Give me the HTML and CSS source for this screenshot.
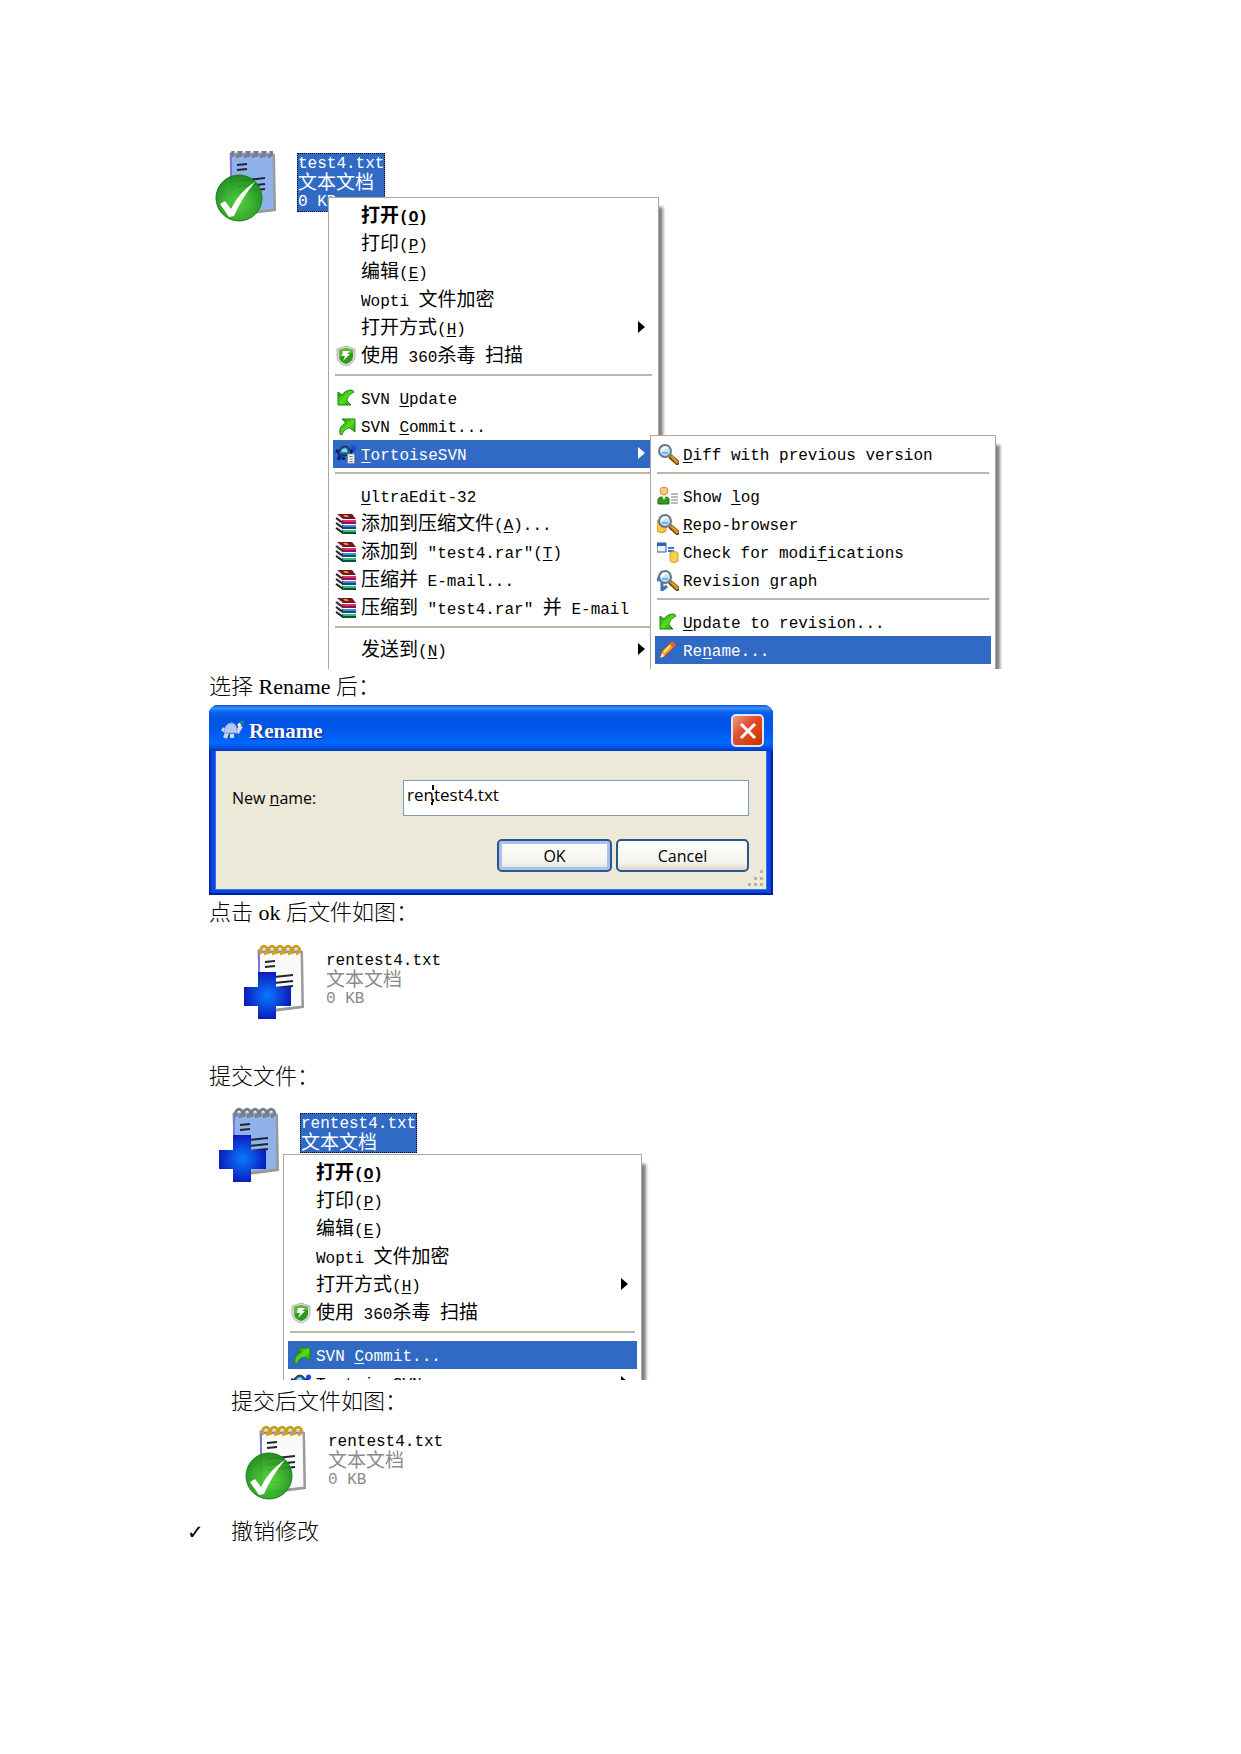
FILE: index.html
```html
<!DOCTYPE html>
<html lang="zh-CN">
<head>
	<meta charset="UTF-8">
	<meta name="viewport" content="width=device-width, initial-scale=1.0">
	<title>TortoiseSVN Rename</title>
	<link rel="stylesheet" href="styles.css">
</head>
<body>

<!-- shared icons -->
<svg class="defs" aria-hidden="true">
	<defs>
		<radialGradient id="gGreen" cx="50%" cy="60%" r="60%">
			<stop offset="0" stop-color="#4fd934"/>
			<stop offset="1" stop-color="#1b861b"/>
		</radialGradient>
		<radialGradient id="gBlue" cx="50%" cy="50%" r="55%">
			<stop offset="0" stop-color="#0a7bff"/>
			<stop offset="1" stop-color="#0a14b8"/>
		</radialGradient>
		<linearGradient id="gArrow" x1="0" y1="0" x2="1" y2="1">
			<stop offset="0" stop-color="#0b8a0b"/>
			<stop offset="0.5" stop-color="#5ddc1c"/>
			<stop offset="1" stop-color="#128a12"/>
		</linearGradient>
	</defs>
	<symbol id="note" viewBox="0 0 62 75">
		<path d="M17 7 L60 7 L61 64 L22 69 L19 67 Z" fill="#999"/>
		<path class="paper" d="M15 6 L58 6 L59 62 L17 67 Z" stroke="#9a9a9a"/>
		<path d="M16 6 V66" stroke="#7f78d8" stroke-width="2"/>
		<path d="M15 8 H58" stroke="#8d86cf" stroke-width="2"/>
		<g class="rings" fill="none" stroke-width="3">
			<path d="M18 10 C16 4 20 1 23 3 C26 5 24 9 21 10"/>
			<path d="M26 10 C24 4 28 1 31 3 C34 5 32 9 29 10"/>
			<path d="M34 10 C32 4 36 1 39 3 C42 5 40 9 37 10"/>
			<path d="M42 10 C40 4 44 1 47 3 C50 5 48 9 45 10"/>
			<path d="M50 10 C48 4 52 1 55 3 C58 5 56 9 53 10"/>
		</g>
		<path d="M22 18 L32 17 M22 23 L32 22 M22 34 L50 31 M22 40 L50 37 M22 45 L50 42 M22 58 L32 57" stroke="#223" stroke-width="2"/>
	</symbol>
	<symbol id="okMark" viewBox="0 0 62 75">
		<circle cx="24" cy="51" r="23" fill="url(#gGreen)" fill-opacity="0.95" stroke="#188018"/>
		<path d="M5 57 L10 54 L16 62 C23 48 31 41 40 35 C32 45 25 55 19 69 L14 70 Z" fill="#fff"/>
	</symbol>
	<symbol id="addMark" viewBox="0 0 62 75">
		<path d="M15 28 H33 V43 H48 V62 H33 V75 H15 V62 H1 V43 H15 Z" fill="url(#gBlue)"/>
	</symbol>
	<symbol id="shield" viewBox="0 0 22 22">
		<path d="M11 1 L20 4 V11 C20 17 15 20 11 21 C7 20 2 17 2 11 V4 Z" fill="#d5d8d5" stroke="#b5b8b5"/>
		<path d="M11 3 L18 5 V11 C18 16 14 18 11 19 C8 18 4 16 4 11 V5 Z" fill="#2d9a12"/>
		<path d="M11 3 L18 5 V8 C13 8 8 10 4 13 V5 Z" fill="#63b83a"/>
		<path d="M8 6 H15 L12 9 H15 L8 16 L10 11 H7 Z" fill="#fff"/>
	</symbol>
	<symbol id="update" viewBox="0 0 22 22">
		<path d="M3 5 V18 H16 L12 14 C12 10 15 7 19 5 L17 3 C12 3 9 5 7 8 Z" fill="url(#gArrow)" stroke="#148a10"/>
	</symbol>
	<symbol id="commit" viewBox="0 0 22 22">
		<path d="M20 4 H7 L11 8 C6 10 4 14 5 19 L7 20 C8 16 11 13 15 13 L20 17 Z" fill="url(#gArrow)" stroke="#148a10"/>
	</symbol>
	<symbol id="tortoise" viewBox="0 0 26 22">
		<path d="M1 7 L6 9 M4 18 L6 13 M10 18 V14 M17 10 L22 5" stroke="#0c1d8c" stroke-width="4"/>
		<path d="M4 12 C4 4 9 1 13 2 C18 3 19 8 19 13 Z" fill="#1f5c8e" stroke="#0b1230"/>
		<path d="M7 9 C8 5 11 3 14 5 L15 9 Z" fill="#77dff5"/>
		<circle cx="22" cy="4" r="3" fill="#1b45e0"/>
		<path d="M15 11 H23 V22 H15 Z" fill="#fff" stroke="#888"/>
		<path d="M17 14 H21 M17 17 H21 M17 20 H21" stroke="#555"/>
	</symbol>
	<symbol id="rar" viewBox="0 0 22 22">
		<path d="M2 2 L8 7 V21 L2 16 Z" fill="#e4e4e4"/>
		<path d="M1 5 L8 10 M1 10 L8 15 M1 15 L8 20" stroke="#222" stroke-width="2"/>
		<path d="M7 7 H21 V11 H7 Z" fill="#8c1640"/>
		<path d="M7 12 H21 V16 H7 Z" fill="#1c4677"/>
		<path d="M7 17 H21 V21 H7 Z" fill="#125238"/>
		<path d="M2 1 H17 L21 6 H8 Z" fill="#7c1222"/>
		<path d="M8 7 H21 V9 H8 Z" fill="#dd2f80"/>
		<path d="M8 12 H21 V14 H8 Z" fill="#3b8ee0"/>
		<path d="M8 17 H21 V19 H8 Z" fill="#2fbf75"/>
		<path d="M8 2 H12 L14 4 H10 Z" fill="#d6a21c"/>
	</symbol>
	<symbol id="lens" viewBox="0 0 22 22">
		<path d="M13 13 L22 21" stroke="#5b3808" stroke-width="5"/>
		<path d="M14 13 L21 20" stroke="#d79a25" stroke-width="3"/>
		<circle cx="8" cy="8" r="6" fill="#bfe4fa" stroke="#6c7680" stroke-width="2"/>
		<path d="M5 8 C5 5 8 4 11 5" fill="none" stroke="#fff" stroke-width="2"/>
		<path d="M5 10 H11" stroke="#3d84c4"/>
	</symbol>
	<symbol id="person" viewBox="0 0 22 22">
		<circle cx="7" cy="6" r="4" fill="#f4c98b" stroke="#d99339"/>
		<path d="M1 19 V14 C2 11 12 11 12 14 V19 Z" fill="#2f9a1c" stroke="#237312"/>
		<path d="M5 11 L7 15 L9 11 Z" fill="#fff"/>
		<path d="M14 9 H21 M14 12 H21 M14 15 H21 M14 18 H21" stroke="#777"/>
	</symbol>
	<symbol id="repo" viewBox="0 0 22 22">
		<path d="M0 8 C3 6 7 6 9 8 V18 C7 20 3 20 0 18 Z" fill="#f5c842" stroke="#cf952a"/>
		<use href="#lens"/>
	</symbol>
	<symbol id="check" viewBox="0 0 22 22">
		<path d="M0 2 H9 V11 H0 Z" fill="#e8f1fc" stroke="#2f5b9c"/>
		<path d="M0 2 H9 V5 H0 Z" fill="#2f62b0"/>
		<path d="M11 7 H17 M11 10 H17" stroke="#2f7ac0" stroke-width="2"/>
		<path d="M13 12 C15 10 19 10 21 12 V20 C19 22 15 22 13 20 Z" fill="#f7cf4c" stroke="#d29c2d"/>
	</symbol>
	<symbol id="graph" viewBox="0 0 22 22">
		<path d="M0 12 L4 5 L7 11 M5 11 V21 L10 17" fill="none" stroke="#3d73b8" stroke-width="3"/>
		<use href="#lens"/>
	</symbol>
	<symbol id="pencil" viewBox="0 0 22 22">
		<path d="M3 19 L5 12 L14 3 C16 2 19 5 18 7 L9 16 Z" fill="#f4a428" stroke="#a8480c"/>
		<path d="M7 13 L15 5" stroke="#ffe28a" stroke-width="2"/>
		<path d="M14 3 C16 2 19 5 18 7 L16 9 L12 5 Z" fill="#e2603c"/>
		<path d="M3 19 L5 14 L8 17 Z" fill="#fff0c8"/>
	</symbol>
	<symbol id="turtle" viewBox="0 0 24 22">
		<path d="M2 9 L6 11 M5 18 L7 13 M12 18 V14 M17 13 L21 6" stroke="#ddd8d0" stroke-width="4"/>
		<path d="M4 13 C4 6 8 3 12 3 C16 4 17 8 17 13 Z" fill="#b4c8f5" stroke="#8aa2dd"/>
		<path d="M18 6 L23 2" stroke="#f4f4f4" stroke-width="3"/>
		<circle cx="22" cy="3" r="2" fill="#1c7f78"/>
	</symbol>
</svg>

<main class="page">

	<figure class="shot">
		<div class="file selected">
			<svg class="file-icon"><use href="#note"/><use href="#okMark"/></svg>
			<div class="file-text">
				<div class="file-name">test4.txt</div>
				<div><span class="zh">文本文档</span></div>
				<div>0 KB</div>
			</div>
		</div>
		<ul class="menu menu-rename">
			<li><button class="item default" type="button"><i class="icon"></i><span><span class="zh">打开</span>(<u>O</u>)</span></button></li>
			<li><button class="item" type="button"><i class="icon"></i><span><span class="zh">打印</span>(<u>P</u>)</span></button></li>
			<li><button class="item" type="button"><i class="icon"></i><span><span class="zh">编辑</span>(<u>E</u>)</span></button></li>
			<li><button class="item" type="button"><i class="icon"></i><span>Wopti <span class="zh">文件加密</span></span></button></li>
			<li><button class="item more" type="button"><i class="icon"></i><span><span class="zh">打开方式</span>(<u>H</u>)</span></button></li>
			<li><button class="item" type="button"><svg class="icon"><use href="#shield"/></svg><span><span class="zh">使用</span> 360<span class="zh">杀毒</span> <span class="zh">扫描</span></span></button></li>
			<li class="line"></li>
			<li><button class="item" type="button"><svg class="icon"><use href="#update"/></svg><span>SVN <u>U</u>pdate</span></button></li>
			<li><button class="item" type="button"><svg class="icon"><use href="#commit"/></svg><span>SVN <u>C</u>ommit...</span></button></li>
			<li class="has-sub">
				<button class="item more active" type="button"><svg class="icon"><use href="#tortoise"/></svg><span><u>T</u>ortoiseSVN</span></button>
				<ul class="menu submenu">
					<li><button class="item" type="button"><svg class="icon"><use href="#lens"/></svg><span><u>D</u>iff with previous version</span></button></li>
					<li class="line"></li>
					<li><button class="item" type="button"><svg class="icon"><use href="#person"/></svg><span>Show <u>l</u>og</span></button></li>
					<li><button class="item" type="button"><svg class="icon"><use href="#repo"/></svg><span><u>R</u>epo-browser</span></button></li>
					<li><button class="item" type="button"><svg class="icon"><use href="#check"/></svg><span>Check for modi<u>f</u>ications</span></button></li>
					<li><button class="item" type="button"><svg class="icon"><use href="#graph"/></svg><span>Revision <u>g</u>raph</span></button></li>
					<li class="line"></li>
					<li><button class="item" type="button"><svg class="icon"><use href="#update"/></svg><span><u>U</u>pdate to revision...</span></button></li>
					<li><button class="item active" type="button"><svg class="icon"><use href="#pencil"/></svg><span>Re<u>n</u>ame...</span></button></li>
				</ul>
			</li>
			<li class="line"></li>
			<li><button class="item" type="button"><i class="icon"></i><span><u>U</u>ltraEdit-32</span></button></li>
			<li><button class="item" type="button"><svg class="icon"><use href="#rar"/></svg><span><span class="zh">添加到压缩文件</span>(<u>A</u>)...</span></button></li>
			<li><button class="item" type="button"><svg class="icon"><use href="#rar"/></svg><span><span class="zh">添加到</span> "test4.rar"(<u>T</u>)</span></button></li>
			<li><button class="item" type="button"><svg class="icon"><use href="#rar"/></svg><span><span class="zh">压缩并</span> E-mail...</span></button></li>
			<li><button class="item" type="button"><svg class="icon"><use href="#rar"/></svg><span><span class="zh">压缩到</span> "test4.rar" <span class="zh">并</span> E-mail</span></button></li>
			<li class="line"></li>
			<li><button class="item more" type="button"><i class="icon"></i><span><span class="zh">发送到</span>(<u>N</u>)</span></button></li>
		</ul>
	</figure>

	<p>选择 Rename 后：</p>

	<form class="dialog">
		<div class="titlebar">
			<svg class="title-icon"><use href="#turtle"/></svg>
			<h2>Rename</h2>
			<button class="close" type="button" aria-label="Close">
				<svg viewBox="0 0 20 20"><path d="M3 3 L17 17 M17 3 L3 17" stroke="#fff" stroke-width="3"/></svg>
			</button>
		</div>
		<div class="dialog-body">
			<div class="field">
				<label for="newName">New <u>n</u>ame:</label>
				<div class="input-box">
					<input type="text" id="newName" name="newName" value="rentest4.txt">
					<svg class="ibeam" viewBox="0 0 5 20"><path d="M2 0 V5 M2 14 V17 M1 17 V20" stroke="#000" stroke-width="2"/></svg>
				</div>
			</div>
			<div class="buttons">
				<button class="btn ok" type="button">OK</button>
				<button class="btn cancel" type="button">Cancel</button>
			</div>
			<svg class="grip" viewBox="0 0 18 18"><path d="M14 0h3v3h-3z M8 7h3v3h-3z M14 7h3v3h-3z M2 13h3v3h-3z M8 13h3v3h-3z M14 13h3v3h-3z" fill="#b8b4a2"/></svg>
		</div>
	</form>

	<p>点击 ok 后文件如图：</p>

	<figure class="result added">
		<div class="file">
			<svg class="file-icon"><use href="#note"/><use href="#addMark"/></svg>
			<div class="file-text">
				<div class="file-name">rentest4.txt</div>
				<div><span class="zh">文本文档</span></div>
				<div>0 KB</div>
			</div>
		</div>
	</figure>

	<p>提交文件：</p>

	<figure class="shot shot-commit">
		<div class="file selected">
			<svg class="file-icon"><use href="#note"/><use href="#addMark"/></svg>
			<div class="file-text">
				<div class="file-name">rentest4.txt</div>
				<div><span class="zh">文本文档</span></div>
			</div>
		</div>
		<ul class="menu menu-commit">
			<li><button class="item default" type="button"><i class="icon"></i><span><span class="zh">打开</span>(<u>O</u>)</span></button></li>
			<li><button class="item" type="button"><i class="icon"></i><span><span class="zh">打印</span>(<u>P</u>)</span></button></li>
			<li><button class="item" type="button"><i class="icon"></i><span><span class="zh">编辑</span>(<u>E</u>)</span></button></li>
			<li><button class="item" type="button"><i class="icon"></i><span>Wopti <span class="zh">文件加密</span></span></button></li>
			<li><button class="item more" type="button"><i class="icon"></i><span><span class="zh">打开方式</span>(<u>H</u>)</span></button></li>
			<li><button class="item" type="button"><svg class="icon"><use href="#shield"/></svg><span><span class="zh">使用</span> 360<span class="zh">杀毒</span> <span class="zh">扫描</span></span></button></li>
			<li class="line"></li>
			<li><button class="item active" type="button"><svg class="icon"><use href="#commit"/></svg><span>SVN <u>C</u>ommit...</span></button></li>
			<li><button class="item more" type="button"><svg class="icon"><use href="#tortoise"/></svg><span><u>T</u>ortoiseSVN</span></button></li>
		</ul>
	</figure>

	<p class="indent">提交后文件如图：</p>

	<figure class="result committed">
		<div class="file">
			<svg class="file-icon"><use href="#note"/><use href="#okMark"/></svg>
			<div class="file-text">
				<div class="file-name">rentest4.txt</div>
				<div><span class="zh">文本文档</span></div>
				<div>0 KB</div>
			</div>
		</div>
	</figure>

	<ul class="steps">
		<li>撤销修改</li>
	</ul>

</main>
</body>
</html>
```

FILE: styles.css
```css
* {
	box-sizing: border-box;
}
body {
	margin: 0;
	background: white;
	color: black;
	font-family: "Liberation Serif", "Noto Sans CJK SC", serif;
	font-size: 22px;
	line-height: 36px;
}
ul {
	list-style: none;
	margin: 0;
	padding: 0;
}
p {
	margin: 0;
	font-weight: 300;
}
figure {
	margin: 0;
}
button {
	font: inherit;
	color: inherit;
}
.defs {
	display: block;
	width: 0;
	height: 0;
}
.page {
	padding: 151px 209px 80px;
}
.indent {
	padding-left: 22px;
}

/* file tiles */
.file {
	display: flex;
	align-items: flex-start;
	gap: 20px;
	font-family: "Liberation Mono", "Noto Sans CJK SC", monospace;
	font-size: 16px;
	line-height: 19px;
	color: #8a8a8a;
}
.file-icon {
	width: 62px;
	height: 75px;
	flex: none;
}
.paper {
	fill: var(--paper, #fafafa);
}
.rings {
	stroke: var(--ring, #c9a227);
}
.file-text {
	margin-top: 6px;
	border: 1px dotted transparent;
	white-space: nowrap;
}
.file-text div {
	display: flex;
	align-items: center;
	height: 19px;
	padding-top: 2px;
	white-space: pre;
}
.file-text .zh {
	margin-bottom: 6px;
}
.file-name {
	color: black;
}
.zh {
	font-family: "Noto Sans CJK SC", sans-serif;
	font-size: 19px;
	line-height: 19px;
}
.selected {
	--paper: #8fb2ea;
	--ring: #77808a;
	color: white;
}
.selected .file-text {
	background: #316ac5;
	border-color: black;
}
.selected .file-name {
	color: white;
}
.result {
	padding-left: 34px;
}
.added {
	padding-top: 13px;
	padding-bottom: 40px;
}
.committed {
	padding: 5px 0 14px 36px;
}

/* the menu opens over the tile, both share one grid cell */
.shot {
	display: grid;
	justify-items: start;
	align-items: start;
	overflow: hidden;
}
.shot > * {
	grid-area: 1 / 1;
}
.shot .file {
	margin: -4px 0 0 6px;
}
.shot-commit {
	height: 285px;
	margin-bottom: 4px;
}
.shot-commit .file {
	margin: 12px 0 0 9px;
}

/* context menus */
.menu {
	background: white;
	border: 1px solid #aca899;
	border-bottom: none;
	padding: 4px 4px 5px;
	box-shadow: 5px 9px 3px -1px #808080;
	font-family: "Liberation Mono", "Noto Sans CJK SC", monospace;
	font-size: 16px;
	line-height: 28px;
}
.menu-rename {
	width: 331px;
	margin: 46px 0 0 119px;
}
.menu-commit {
	width: 359px;
	margin: 59px 0 0 74px;
}
.item {
	display: flex;
	align-items: center;
	gap: 4px;
	width: 100%;
	height: 28px;
	padding: 0 9px 0 2px;
	border: none;
	background: none;
	text-align: left;
	white-space: pre;
}
.item > span {
	padding-top: 3px;
}
.item.default {
	font-weight: bold;
}
.item.active {
	background: #316ac5;
	color: white;
}
.item u {
	text-underline-offset: 2px;
}
.icon {
	width: 22px;
	height: 22px;
	flex: none;
	overflow: visible;
}
.more::after {
	content: "";
	margin: 0 0 3px auto;
	border: 6px solid transparent;
	border-left: 7px solid currentColor;
	border-right: none;
}
.line {
	height: 14px;
	padding-top: 4px;
}
.line::before {
	content: "";
	display: block;
	height: 2px;
	margin: 0 2px;
	background: #bcb8a8;
}
.has-sub {
	position: relative;
}
.submenu {
	position: absolute;
	top: -5px;
	left: 317px;
	width: 346px;
	padding-bottom: 10px;
	z-index: 1;
}

/* rename dialog */
.dialog {
	max-width: 564px;
	padding: 0 6px 5px;
	background: #0a48e0;
	border-radius: 9px 9px 0 0;
	box-shadow: inset -2px -2px 1px #001ea0, inset 2px 0 1px #0a2ac8;
	overflow: hidden;
	font-family: "Open Sans", sans-serif;
	font-size: 16px;
	line-height: 22px;
}
.titlebar {
	display: flex;
	align-items: center;
	gap: 5px;
	height: 46px;
	margin: 0 -6px;
	padding: 5px 9px 0 11px;
	background: linear-gradient(#0a50dc 0, #3a94ff 3px, #0a62f0 7px, #0054e3 14px, #0058ee 26px, #0068ff 38px, #0050e0 43px, #0038c0 46px);
}
.titlebar h2 {
	margin: 0;
	color: white;
	font-family: "Liberation Serif", serif;
	font-size: 21px;
	text-shadow: 1px 1px 1px #0a1883;
}
.title-icon {
	width: 24px;
	height: 22px;
}
.close {
	display: flex;
	align-items: center;
	justify-content: center;
	width: 33px;
	height: 33px;
	margin-left: auto;
	padding: 0;
	border: 2px solid #e0e4f8;
	border-radius: 5px;
	background: linear-gradient(135deg, #ee9a84, #e05030 40%, #d63c08 80%, #b03000);
}
.close svg {
	width: 20px;
	height: 20px;
}
.dialog-body {
	position: relative;
	padding: 29px 17px 17px 16px;
	background: #ece9d8;
	border: 1px solid #3a72e8;
	border-top: none;
}
.field {
	display: flex;
	align-items: center;
}
.field label {
	width: 171px;
	flex: none;
}
.input-box {
	position: relative;
	flex: 1;
}
.input-box input {
	display: block;
	width: 100%;
	height: 36px;
	padding: 0 3px 7px;
	border: 1px solid #7f9db9;
	border-radius: 0;
	background: white;
	font: inherit;
	font-size: 17px;
	outline: none;
}
.ibeam {
	position: absolute;
	top: 5px;
	left: 28px;
	width: 5px;
	height: 20px;
}
.buttons {
	display: flex;
	justify-content: flex-end;
	gap: 4px;
	margin-top: 23px;
}
.btn {
	width: 133px;
	height: 33px;
	padding: 0;
	border: 2px solid #2b5786;
	border-radius: 5px;
	background: linear-gradient(white, #f4f3ee 75%, #dcd8cc);
}
.ok {
	width: 115px;
	box-shadow: inset 0 0 0 3px #a9c0f0;
}
.grip {
	position: absolute;
	right: 2px;
	bottom: 1px;
	width: 18px;
	height: 18px;
}

/* wingdings style tick bullets */
.steps li {
	display: flex;
	margin-left: -22px;
	font-weight: 300;
}
.steps li::before {
	content: "✓";
	width: 44px;
	font-family: "DejaVu Sans", sans-serif;
	font-size: 20px;
	font-weight: bold;
}
```
